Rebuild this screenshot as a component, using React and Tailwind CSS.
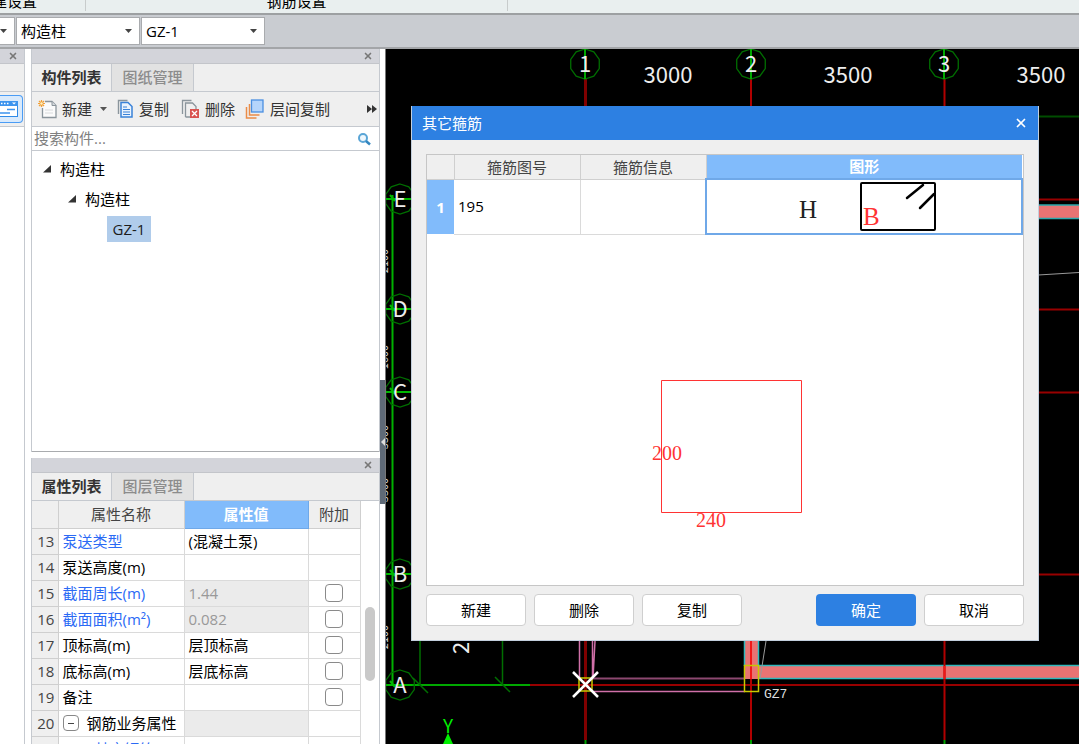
import React, { useState } from 'react';
import { X } from 'lucide-react';

const propertyRows = [
  { no: 13, name: '泵送类型', value: '(混凝土泵)', link: true },
  { no: 14, name: '泵送高度(m)', value: '' },
  { no: 15, name: '截面周长(m)', value: '1.44', link: true, locked: true, extra: true },
  { no: 16, name: '截面面积(m²)', value: '0.082', link: true, locked: true, extra: true },
  { no: 17, name: '顶标高(m)', value: '层顶标高', extra: true },
  { no: 18, name: '底标高(m)', value: '层底标高', extra: true },
  { no: 19, name: '备注', value: '', extra: true },
  { no: 20, name: '钢筋业务属性', value: '', group: true, locked: true },
];

const rowAxes = [
  { label: 'E', y: 199 },
  { label: 'D', y: 309 },
  { label: 'C', y: 392 },
  { label: 'B', y: 574 },
  { label: 'A', y: 685 },
];

const columnAxes = [
  { label: '1', x: 585 },
  { label: '2', x: 751 },
  { label: '3', x: 944 },
];

const spans = [
  { text: '3000', x: 668 },
  { text: '3500', x: 848 },
  { text: '3500', x: 1041 },
];

const sideSpans = [
  { text: '2100', y: 261 },
  { text: '1600', y: 357 },
  { text: '3500', y: 437 },
  { text: '3500', y: 490 },
  { text: '2100', y: 637 },
];

function SelectBox({ label, options, className }) {
  return (
    <div className={`relative h-7 border border-[#a9abae] bg-white ${className}`}>
      <select aria-label={label} className="h-full w-full appearance-none bg-transparent pl-1 pr-5 text-[15px] text-black outline-none">
        {options.map((o) => (
          <option key={o}>{o}</option>
        ))}
      </select>
      <svg viewBox="0 0 8 4" className="pointer-events-none absolute right-1.5 top-[11px] h-1 w-2">
        <path d="M0 0h7L3.500 4z" fill="#444" />
      </svg>
    </div>
  );
}

function PanelStrip({ label }) {
  return (
    <div className="flex h-[15px] shrink-0 items-center justify-end border-b border-[#c3c5ca] bg-[#d3d4da] pr-1.5">
      <button aria-label={label} className="text-[#777]">
        <X size={10} strokeWidth={4} />
      </button>
    </div>
  );
}

function Tabs({ items }) {
  return (
    <div className="flex h-7 shrink-0 border-b border-[#c5c9cf] bg-[#efefef] text-[15px]">
      {items.map((item, i) => (
        <button
          key={item}
          className={
            i === 0
              ? 'w-20 border-r border-[#c5c9cf] font-semibold text-[#333]'
              : 'w-[82px] border-r border-[#c5c9cf] bg-[#e2e2e2] font-medium text-[#8c8c8c]'
          }
        >
          {item}
        </button>
      ))}
    </div>
  );
}

function NewIcon() {
  return (
    <svg viewBox="0 0 20 20" className="h-5 w-5">
      <path d="M7 2.500h7l4 4v12H4.500V9" fill="#fbfbfb" stroke="#8b959c" strokeWidth="1.300" />
      <path d="M14 2.500v4h4" fill="#d5d9dc" stroke="#8b959c" />
      <path d="M7 11h8M7 14h8" stroke="#d8dadc" />
      <path d="M1 2l5 5M6 2L1 7M3.500 1v7M0 4.500h7" stroke="#f3a035" strokeWidth="1.200" />
      <circle cx="3.500" cy="4.500" r="1.200" fill="#fff3c8" />
    </svg>
  );
}

function CopyIcon() {
  return (
    <svg viewBox="0 0 16 20" className="h-5 w-4">
      <path d="M1.500 15V1.500h9" fill="none" stroke="#8b959c" strokeWidth="1.400" />
      <path d="M4 3.500h7l4 4V18H4z" fill="#eaf3fd" stroke="#3a82d8" strokeWidth="1.500" />
      <path d="M6 8h4M6 10.500h7M6 13h7M6 15.500h7" stroke="#3a82d8" />
    </svg>
  );
}

function DeleteIcon() {
  return (
    <svg viewBox="0 0 18 20" className="h-5 w-[18px]">
      <path d="M1.500 15V1.500h9" fill="none" stroke="#8b959c" strokeWidth="1.300" />
      <path d="M4.500 18V4h7l3.500 3.500V10M4.500 18H9" fill="none" stroke="#8b959c" strokeWidth="1.300" />
      <rect x="9" y="10" width="9" height="9" fill="#d9534f" />
      <path d="M11 12l5 5M16 12l-5 5" stroke="#fff" strokeWidth="1.300" />
    </svg>
  );
}

function LayerCopyIcon() {
  return (
    <svg viewBox="0 0 19 20" className="h-5 w-[19px]">
      <path d="M1.500 8v11h10" fill="none" stroke="#ea8c48" strokeWidth="1.500" />
      <path d="M4.500 5v11h10" fill="none" stroke="#ea8c48" strokeWidth="1.500" />
      <rect x="6.500" y="1" width="11.500" height="12" fill="#b5d5fb" stroke="#4a8fe0" strokeWidth="1.300" />
    </svg>
  );
}

function Ribbon() {
  return (
    <header className="shrink-0">
      <div className="flex h-[15px] overflow-hidden border-b-2 border-[#9da0a2] bg-[#e9efef] text-[15px] leading-5 text-black">
        <div className="flex h-[11px] w-[86px] shrink-0 items-end justify-end border-r border-[#c8cccc] pr-12">
          <span className="whitespace-nowrap">土建设置</span>
        </div>
        <div className="flex h-[11px] w-[422px] shrink-0 items-end justify-center border-r border-[#c8cccc]">
          <span className="whitespace-nowrap">钢筋设置</span>
        </div>
      </div>
      <div className="flex h-[34px] items-center gap-px border-b-2 border-[#a3a5a8] bg-[#c9ccd1]">
        <SelectBox label="楼层" options={['']} className="w-[15px] border-l-0" />
        <SelectBox label="构件类型" options={['构造柱', '框架柱']} className="w-[124px]" />
        <SelectBox label="构件" options={['GZ-1', 'GZ-2']} className="w-[124px]" />
      </div>
    </header>
  );
}

function ModulePanel() {
  return (
    <aside className="flex w-[25px] shrink-0 flex-col border-r border-[#c5c9cf] bg-white">
      <PanelStrip label="关闭导航" />
      <div className="h-7 border-b border-[#c5c9cf] bg-[#efefef]" />
      <div className="flex h-[35px] items-center border-b border-[#c5c9cf] bg-[#efefef]">
        <button aria-label="视图" className="flex h-7 w-[23px] items-center rounded-r border border-l-0 border-[#4a9cf5] bg-[#d9eafc]">
          <svg viewBox="0 0 18 16" className="h-4 w-[18px]">
            <rect x="-3" y="0.500" width="20.500" height="15" fill="#fff" stroke="#2f8be8" />
            <rect x="-3" y="0" width="21" height="5" fill="#3d94ee" />
            <path d="M1 2.500h1.500M4 2.500h1.500M7 2.500h1.500" stroke="#fff" strokeWidth="1.500" />
            <path d="M12 1.500h4l-2 2z" fill="#fff" />
            <path d="M7 8.500h8M0 12h10" stroke="#3d94ee" strokeWidth="1.500" />
          </svg>
        </button>
      </div>
    </aside>
  );
}

function TreeArrow() {
  return (
    <svg viewBox="0 0 9 8" className="h-2 w-[9px]">
      <path d="M8 0v7.500H0z" fill="#333" />
    </svg>
  );
}

function ComponentPanel() {
  return (
    <section className="flex min-h-0 flex-1 flex-col border-x border-[#c5c9cf]">
      <PanelStrip label="关闭构件列表" />
      <Tabs items={['构件列表', '图纸管理']} />
      <div className="flex h-[35px] shrink-0 items-center border-b border-[#c5c9cf] bg-[#efefef] pl-1.5 pr-0.5 text-[15px] text-[#333]">
        <button className="flex items-center gap-1">
          <NewIcon />
          新建
          <svg viewBox="0 0 7 4" className="ml-1 h-1 w-[7px]">
            <path d="M0 0h7L3.500 4z" fill="#555" />
          </svg>
        </button>
        <button className="ml-2.5 flex items-center gap-1.5">
          <CopyIcon />
          复制
        </button>
        <button className="ml-3 flex items-center gap-1.5">
          <DeleteIcon />
          删除
        </button>
        <button className="ml-2.5 flex items-center gap-1.5">
          <LayerCopyIcon />
          层间复制
        </button>
        <button aria-label="更多" className="ml-auto">
          <svg viewBox="0 0 10 8" className="h-2 w-2.5">
            <path d="M0 0l5 4-5 4zM5 0l5 4-5 4z" fill="#333" />
          </svg>
        </button>
      </div>
      <div className="flex h-6 shrink-0 items-center border-b border-[#c5c9cf] bg-white pl-0.5 pr-2">
        <input
          aria-label="搜索构件"
          placeholder="搜索构件..."
          className="min-w-0 flex-1 text-[15px] text-black outline-none placeholder:text-[#808080]"
        />
        <button aria-label="搜索">
          <svg viewBox="0 0 14 14" className="h-3.5 w-3.5">
            <circle cx="6" cy="6" r="4" fill="#eef7fd" stroke="#5aa5d6" strokeWidth="2" />
            <path d="M9 9l4 3.500" stroke="#3487c0" strokeWidth="2.500" />
          </svg>
        </button>
      </div>
      <ul className="flex-1 border-b border-[#a9abae] bg-white pt-[3px] text-[15px] text-black">
        <li className="flex h-[30px] items-center gap-2 pl-[11px]">
          <TreeArrow />
          构造柱
        </li>
        <li className="flex h-[30px] items-center gap-2 pl-9">
          <TreeArrow />
          构造柱
        </li>
        <li className="flex h-[30px] items-center pl-[75px]">
          <button className="h-[26px] w-11 bg-[#b0cceb] text-[#1b1b1b]">GZ-1</button>
        </li>
      </ul>
    </section>
  );
}

function PropertyPanel() {
  return (
    <section className="mt-1.5 flex h-[286px] shrink-0 flex-col overflow-hidden border-x border-[#c5c9cf] bg-white">
      <PanelStrip label="关闭属性列表" />
      <Tabs items={['属性列表', '图层管理']} />
      <div className="flex min-h-0 flex-1">
        <table className="h-0 w-[328px] table-fixed border-collapse text-[15px] leading-5">
          <colgroup>
            <col className="w-[26px]" />
            <col className="w-[126px]" />
            <col className="w-[124px]" />
            <col className="w-[52px]" />
          </colgroup>
          <thead>
            <tr className="h-[27px] bg-[#efefef] text-[#444]">
              <th className="border-b border-r border-[#cfcfcf]" />
              <th className="border-b border-r border-[#cfcfcf] p-0 font-normal">属性名称</th>
              <th className="border border-t-0 border-[#6fa8e8] bg-[#81bbfb] p-0 font-bold text-white">属性值</th>
              <th className="border-b border-r border-[#cfcfcf] p-0 font-normal">附加</th>
            </tr>
          </thead>
          <tbody>
            {propertyRows.map((row) => (
              <tr key={row.no} className="h-[26px]">
                <td className="border-b border-r border-[#cfcfcf] bg-[#efefef] p-0 pl-0.5 text-center text-[#444]">{row.no}</td>
                <td className={`whitespace-nowrap border-b border-r border-[#dadada] p-0 pl-1 ${row.link ? 'text-[#2b6af5]' : 'text-black'}`}>
                  {row.group ? (
                    <span className="flex items-center gap-2">
                      <button aria-label="折叠" className="flex h-4 w-4 items-center justify-center rounded-sm border border-[#888]">
                        <span className="h-px w-1.5 bg-[#444]" />
                      </button>
                      {row.name}
                    </span>
                  ) : (
                    row.name
                  )}
                </td>
                <td className={`border-b border-r border-[#dadada] p-0 pl-1 ${row.locked ? 'bg-[#ebebeb] text-[#999]' : 'text-black'}`}>
                  {row.value}
                </td>
                <td className="border-b border-r border-[#dadada] p-0">
                  {row.extra && (
                    <input
                      type="checkbox"
                      aria-label={`附加 ${row.name}`}
                      className="mx-auto block h-[18px] w-[18px] appearance-none rounded border border-[#8a8a8a] bg-white checked:bg-[#2d80e2]"
                    />
                  )}
                </td>
              </tr>
            ))}
            <tr className="h-[26px]">
              <td className="border-r border-[#cfcfcf] bg-[#efefef] p-0" />
              <td className="border-r border-[#dadada] p-0 pl-9 text-[#2b6af5]">其它钢筋</td>
              <td className="border-r border-[#dadada]" />
              <td className="border-r border-[#dadada]" />
            </tr>
          </tbody>
        </table>
        <div className="flex flex-1 justify-center pt-[106px]">
          <div className="h-[74px] w-2.5 rounded-full bg-[#c9c9c9]" />
        </div>
      </div>
    </section>
  );
}

// Grid bubble, ten-sided like the CAD viewport draws it
function Bubble({ cx, cy }) {
  const points = Array.from({ length: 10 }, (_, i) => {
    const a = (i * Math.PI) / 5 - Math.PI / 2;
    return `${cx + 15 * Math.cos(a)},${cy + 15 * Math.sin(a)}`;
  }).join(' ');
  return <polygon points={points} fill="none" stroke="#006e00" strokeWidth="1.300" />;
}

function Drawing() {
  return (
    <svg
      viewBox="386 49 693 695"
      preserveAspectRatio="xMinYMin slice"
      className="block h-full w-full bg-black font-['Noto_Sans_CJK_SC',sans-serif]"
    >
      {/* axes running behind the dialog */}
      <path d="M1030 199.500h49M1030 309.500h49M1030 392.500h49M1030 574.500h49" stroke="#980000" strokeWidth="2" />
      <path d="M1030 116.500h49" stroke="#004d00" strokeWidth="2" />
      <path d="M1030 205h49v13h-49z" fill="#e97373" />
      <path d="M1030 205h49M1030 218.500h49" stroke="#2aa9ad" strokeWidth="1.500" />
      <path d="M1030 275.500l49-3" stroke="#999" />

      {/* walls at the bottom */}
      <path d="M745 630h13v49h-13zM758 666h321v12H758z" fill="#e97373" />
      <path d="M744.500 630v36M758.500 630v36M758 665.500h321M758 678.500h321" fill="none" stroke="#2fb9bd" strokeWidth="1.500" />
      <path d="M579.500 630v48M592.500 630v48M595 641l-2 37M592 691.500h153" fill="none" stroke="#d070a8" strokeWidth="1.500" />
      <path d="M592 678.500h153" stroke="#8c4870" strokeWidth="2" />
      <path d="M766 641l-6 38" stroke="#999" />
      <path d="M530 685h549" stroke="#980000" strokeWidth="2" />
      <path d="M585.500 79v661" stroke="#800000" strokeWidth="3" />
      <path d="M751 79v661M944.500 79v661" stroke="#b00000" strokeWidth="2" />
      <path d="M751 641v38M944.500 666v13" stroke="#f01818" strokeWidth="2" />
      <path d="M579 678h13v13h-13zM744.500 665.500h14v26h-14z" fill="none" stroke="#c8c800" strokeWidth="1.500" />
      <path d="M573 672l25 25M598 672l-25 25" stroke="#fff" strokeWidth="2.500" />
      <path d="M585.500 740v4M751 740v4M944.500 740v4" stroke="#00a000" strokeWidth="2" />
      <text x="764" y="698" className="font-['Liberation_Sans_Narrow','Liberation_Mono',monospace]" fontSize="13" fill="#ddd">GZ7</text>

      {/* green dimension lines */}
      <path d="M392.500 195v490" stroke="#00b000" strokeWidth="2" />
      <path d="M386 685h144" stroke="#00a800" strokeWidth="2" />
      <path d="M420 630v55M502.500 630v55M413 678l15 15M495 677l15 15" stroke="#006e00" strokeWidth="1.500" />
      <text transform="translate(469 654) rotate(-90)" fontSize="22" fill="#eee">2</text>
      <text x="448" y="733" fontSize="19" textAnchor="middle" fill="#00f000">Y</text>
      <path d="M448 733l5 11h-10z" fill="#00f000" />

      {columnAxes.map((axis) => (
        <g key={axis.label}>
          <Bubble cx={axis.x} cy={64} />
          <path d={`M${axis.x} 49v30`} stroke="#00a800" strokeWidth="2" />
          <text x={axis.x} y="72" fontSize="22" textAnchor="middle" fill="#eee">{axis.label}</text>
        </g>
      ))}
      {spans.map((span) => (
        <text key={span.x} x={span.x} y="83" fontSize="22" textAnchor="middle" fill="#eee">{span.text}</text>
      ))}
      {rowAxes.map((axis) => (
        <g key={axis.label}>
          <Bubble cx={400} cy={axis.y} />
          <path d={`M386 ${axis.y}h26M390 ${axis.y - 4}l5 6`} stroke="#00b800" strokeWidth="2" />
          <text x="400" y={axis.y + 8} fontSize="22" textAnchor="middle" fill="#eee">{axis.label}</text>
        </g>
      ))}
      {sideSpans.map((span) => (
        <text key={span.y} transform={`translate(388 ${span.y}) rotate(-90)`} fontSize="11" textAnchor="middle" fill="#ddd">
          {span.text}
        </text>
      ))}
    </svg>
  );
}

function DialogButton({ children, primary, onClick }) {
  return (
    <button
      onClick={onClick}
      className={
        primary
          ? 'h-8 w-[100px] rounded bg-[#2d80e2] text-white'
          : 'h-8 w-[100px] rounded border border-[#cfcfcf] bg-white text-black'
      }
    >
      {children}
    </button>
  );
}

function StirrupDialog({ onClose }) {
  return (
    <div role="dialog" aria-label="其它箍筋" className="absolute left-[25px] top-[57px] w-[628px] border border-t-0 border-[#c3cfdd] bg-[#efefef] text-[15px]">
      <div className="flex h-[34px] items-center justify-between bg-[#2d80e2] px-2.5 text-white">
        <h2>其它箍筋</h2>
        <button aria-label="关闭" onClick={onClose}>
          <X size={14} strokeWidth={3} />
        </button>
      </div>
      <div className="p-3.5">
        <div className="border border-[#c6c6c6] bg-white">
          <table className="w-full table-fixed border-collapse">
            <colgroup>
              <col className="w-[27px]" />
              <col className="w-[126px]" />
              <col className="w-[126px]" />
              <col />
            </colgroup>
            <thead>
              <tr className="h-6 bg-[#efefef] text-[#444]">
                <th className="border-b border-r border-[#cfcfcf]" />
                <th className="border-b border-r border-[#cfcfcf] p-0 font-normal">箍筋图号</th>
                <th className="border-b border-r border-[#cfcfcf] p-0 font-normal">箍筋信息</th>
                <th className="border-b border-[#6fa8e8] bg-[#81bbfb] p-0 font-bold text-white">图形</th>
              </tr>
            </thead>
            <tbody>
              <tr className="h-[55px]">
                <td className="bg-[#81bbfb] p-0 text-center font-bold text-white">1</td>
                <td className="border-b border-r border-[#dadada] p-0 pl-1 text-black">195</td>
                <td className="border-b border-r border-[#dadada] p-0" />
                <td className="border-2 border-[#6fa8e8] p-0">
                  <svg viewBox="0 0 314 51" className="mx-auto block h-[51px] w-[314px] font-['Liberation_Serif',serif]">
                    <text x="101" y="37" fontSize="25" textAnchor="middle" fill="#222">H</text>
                    <rect x="154" y="2" width="74" height="47" rx="1" fill="none" stroke="#000" strokeWidth="2" />
                    <path d="M200 17l16-13M213 27l14-14" stroke="#000" strokeWidth="2.500" strokeLinecap="round" />
                    <text x="156" y="44" fontSize="25" fill="#f33">B</text>
                  </svg>
                </td>
              </tr>
            </tbody>
          </table>
          <svg viewBox="0 0 596 350" className="block h-[350px] w-full font-['Liberation_Serif',serif]">
            <path d="M234.500 145.500h140v132h-140z" fill="none" stroke="#ff3333" strokeWidth="1" />
            <text x="225" y="225" fontSize="20" fill="#f33">200</text>
            <text x="269" y="292" fontSize="20" fill="#f33">240</text>
          </svg>
        </div>
        <div className="mt-2 flex justify-between">
          <div className="flex gap-2">
            <DialogButton>新建</DialogButton>
            <DialogButton>删除</DialogButton>
            <DialogButton>复制</DialogButton>
          </div>
          <div className="flex gap-2">
            <DialogButton primary onClick={onClose}>确定</DialogButton>
            <DialogButton onClick={onClose}>取消</DialogButton>
          </div>
        </div>
      </div>
    </div>
  );
}

export default function App() {
  const [dialogOpen, setDialogOpen] = useState(true);

  return (
    <div className="flex h-screen flex-col overflow-hidden bg-white font-['Open_Sans','Noto_Sans_CJK_SC',sans-serif]">
      <Ribbon />
      <div className="flex min-h-0 flex-1">
        <ModulePanel />
        <div className="ml-1.5 flex w-[349px] shrink-0 flex-col">
          <ComponentPanel />
          <PropertyPanel />
        </div>
        <div className="relative w-1.5 shrink-0 border-r border-[#777]">
          <button aria-label="收起" className="absolute left-0 top-[331px] flex h-[124px] w-[5px] items-center bg-[#5f6a77]">
            <svg viewBox="0 0 5 8" className="h-2 w-[5px]">
              <path d="M5 0v8L1 4z" fill="#ddd" />
            </svg>
          </button>
        </div>
        <main className="relative min-w-0 flex-1 overflow-hidden bg-black">
          <Drawing />
          {dialogOpen && <StirrupDialog onClose={() => setDialogOpen(false)} />}
        </main>
      </div>
    </div>
  );
}
